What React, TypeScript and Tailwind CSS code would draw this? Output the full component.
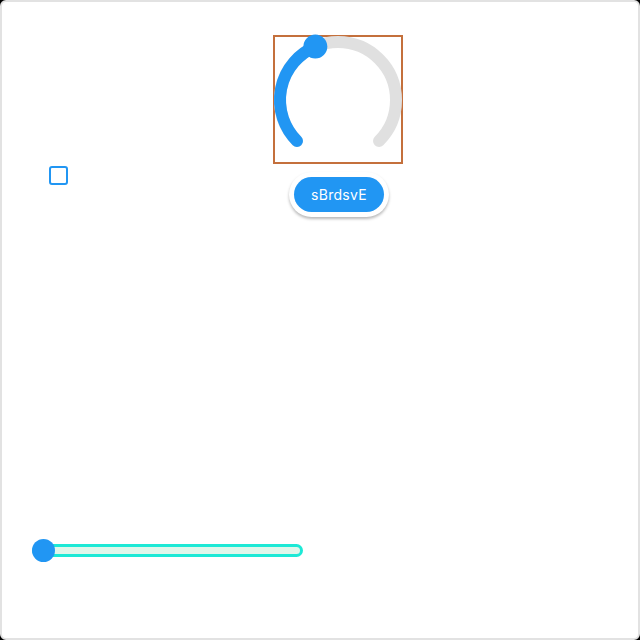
import React from "react";

function Knob() {
  const cx = 63;
  const cy = 63;
  const r = 58;
  const pt = (deg: number) => {
    const a = (deg * Math.PI) / 180;
    return [cx + r * Math.sin(a), cy - r * Math.cos(a)];
  };
  const [sx, sy] = pt(-135);
  const [ex, ey] = pt(135);
  const [vx, vy] = pt(-23);
  return (
    <div className="w-[130px] h-[129px] border-2 border-[#c4703c]">
      <svg width="126" height="125" className="overflow-visible">
        <path
          d={`M${sx} ${sy} A${r} ${r} 0 1 1 ${ex} ${ey}`}
          fill="none"
          stroke="#e0e0e0"
          strokeWidth="12"
          strokeLinecap="round"
        />
        <path
          d={`M${sx} ${sy} A${r} ${r} 0 0 1 ${vx} ${vy}`}
          fill="none"
          stroke="#2196f3"
          strokeWidth="12"
          strokeLinecap="round"
        />
        <circle cx={vx} cy={vy} r="12" fill="#2196f3" />
      </svg>
    </div>
  );
}

export default function App() {
  return (
    <div className="w-[640px] h-[640px] bg-black font-['Inter',sans-serif]">
      <div className="w-full h-full bg-white border-2 border-[#e2e2e2] rounded-[6px] flex flex-col">
        <div className="ml-[271px] mt-[33px]">
          <Knob />
        </div>
        <div className="flex items-start">
          <div className="ml-[47px] mt-[2px] w-[19px] h-[19px] border-2 border-[#2196f3] rounded-[3px]" />
          <div className="ml-[221px] mt-[8px] p-[5px] bg-white rounded-full shadow-[0_2px_3px_rgba(0,0,0,0.28)]">
            <div className="w-[90px] h-[35px] rounded-full bg-[#2196f3] text-white text-[14px] tracking-[0.3px] flex items-center justify-center">
              sBrdsvE
            </div>
          </div>
        </div>
        <div className="ml-[30px] mt-[327px] relative w-[271px] h-[13px]">
          <div className="w-full h-full rounded-full border-[3px] border-[#1de9d6] bg-[#e0f6ea]" />
          <div className="absolute left-0 top-[-5px] w-[23px] h-[23px] rounded-full bg-[#2196f3]" />
        </div>
      </div>
    </div>
  );
}
